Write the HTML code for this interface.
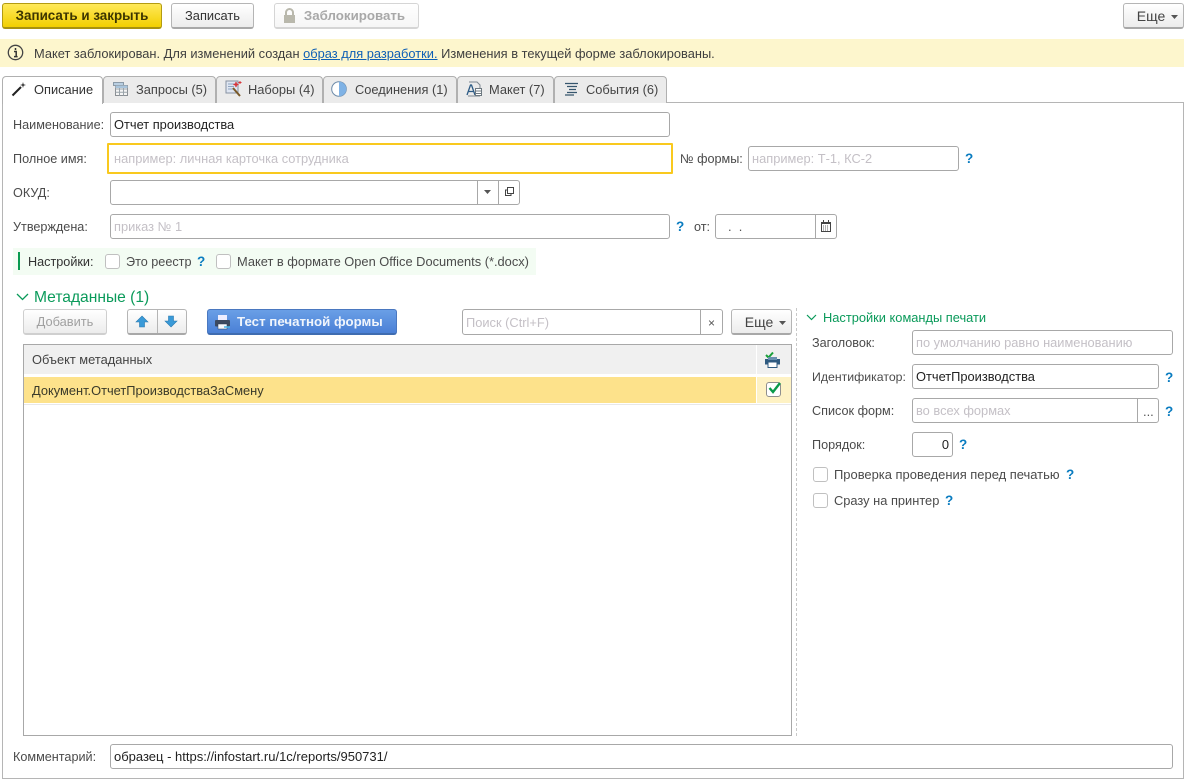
<!DOCTYPE html>
<html lang="ru"><head><meta charset="utf-8"><title>Макет</title>
<style>
html,body{margin:0;padding:0;background:#fff}
#p{position:relative;width:1186px;height:781px;overflow:hidden;background:#fff;font:12.85px/16px "Liberation Sans",Arial,sans-serif;color:#4b4b4b}
#p div,#p span.a,#p svg{position:absolute;box-sizing:border-box}
.t{white-space:nowrap}
.l{font-size:12.65px}
.btn{background:linear-gradient(#fff,#ececec);border:1px solid #b5b5b5;border-bottom:2px solid #a8a8a8;border-radius:3px;text-align:center;color:#333;line-height:24px}
.in{background:#fff;border:1px solid #a8a8a8;border-radius:3px;height:25px;line-height:23px;padding-left:3px;color:#222;white-space:nowrap;overflow:hidden}
.ph{color:#c4c0c6}
.q{color:#0a7cc0;font-weight:bold;font-size:13.5px;line-height:18px;white-space:nowrap}
.cb{width:15px;height:15px;border:1px solid #c0c0c0;border-radius:3px;background:#fff}
.tab{top:76px;height:27px;background:#ebebeb;border:1px solid #b0b0b0;border-bottom:none;border-radius:4px 4px 0 0;line-height:26px;color:#444;white-space:nowrap}
</style></head><body><div id="p">

<!-- Top command bar -->
<div class="btn" style="left:2px;top:3px;width:160px;height:26px;background:linear-gradient(#ffe95a,#f2cf00);border:1px solid #b39b12;border-bottom:2px solid #a8920f;font-weight:bold;font-size:13.4px;color:#3c3500">Записать и закрыть</div>
<div class="btn" style="left:171px;top:3px;width:83px;height:26px">Записать</div>
<div class="btn" style="left:274px;top:3px;width:145px;height:26px;border-color:#d5d5d5;background:linear-gradient(#fff,#f6f6f6);color:#a8a8a8;font-weight:bold;padding-left:16px;font-size:13.3px">Заблокировать</div>
<svg style="left:282px;top:8px" width="15" height="16" viewBox="0 0 15 16"><path d="M4 7V4.500a3.500 3.500 0 0 1 7 0V7" fill="none" stroke="#b9b8ac" stroke-width="2"/><rect x="2" y="7" width="11" height="8" fill="#b9b8ac"/></svg>
<div class="btn t" style="left:1123px;top:3px;width:61px;height:26px;padding-right:5px;font-size:14px;color:#444">Еще</div>
<svg style="left:1171px;top:15px" width="7" height="4"><path d="M0 0h7L3.500 4z" fill="#555"/></svg>

<!-- Banner -->
<div style="left:0;top:39px;width:1184px;height:28px;background:#fdf6cd"></div>
<svg style="left:7px;top:44px" width="17" height="17" viewBox="0 0 17 17"><circle cx="8.500" cy="8.500" r="7.200" fill="none" stroke="#444" stroke-width="1.300"/><path d="M8.500 4v2M7 7.500h2.200v5M7 12.600h3.600" fill="none" stroke="#333" stroke-width="1.500"/></svg>
<div class="t" style="left:34px;top:46px;color:#3f3f3f">Макет заблокирован. Для изменений создан <span style="color:#0e5fb5;text-decoration:underline">образ для разработки.</span> Изменения в текущей форме заблокированы.</div>

<!-- Main frame -->
<div style="left:2px;top:102px;width:1182px;height:677px;border:1px solid #b5b5b5"></div>

<!-- Tabs -->
<div class="tab" style="left:103px;width:113px;padding-left:32px">Запросы (5)</div>
<div class="tab" style="left:216px;width:107px;padding-left:31px">Наборы (4)</div>
<div class="tab" style="left:323px;width:134px;padding-left:31px">Соединения (1)</div>
<div class="tab" style="left:457px;width:97px;padding-left:31px">Макет (7)</div>
<div class="tab" style="left:554px;width:113px;padding-left:31px">События (6)</div>
<div class="tab" style="left:2px;width:101px;height:28px;background:#fff;padding-left:31px;color:#333">Описание</div>
<svg style="left:11px;top:81px" width="16" height="16" viewBox="0 0 16 16"><path d="M1.500 14.500 10 6" stroke="#222" stroke-width="2"/><path d="M12 1l.6 2.400L15 4l-2.400.6L12 7l-.6-2.400L9 4l2.400-.6z" fill="#222"/></svg>
<svg style="left:112px;top:81px" width="17" height="16" viewBox="0 0 17 16"><path d="M1.500 1.500h10v3h-10z" fill="#b9cfe2" stroke="#8a9aa8"/><rect x="3.500" y="4.500" width="12" height="10" fill="#f4f4f4" stroke="#8a8f94"/><path d="M3.500 8h12M3.500 11.300h12M7.500 4.500v10M11.500 4.500v10" stroke="#9aa3aa"/><path d="M3.500 4.500h12V7h-12z" fill="#a8c4dc"/></svg>
<svg style="left:225px;top:80px" width="17" height="17" viewBox="0 0 17 17"><rect x="1" y="1" width="12" height="12" fill="#dfe6f2" stroke="#8792a2"/><path d="M3 4h8M3 6.500h6M3 9h5" stroke="#8ea4c0"/><path d="M8 8l7 8" stroke="#7a5a2a" stroke-width="2"/><path d="M11 2l.5 2 2 .5-2 .5-.5 2-.5-2-2-.5 2-.5zM15 1v3M13.500 2.500h3" stroke="#d8343a" fill="#d8343a"/></svg>
<svg style="left:331px;top:81px" width="17" height="16" viewBox="0 0 17 16"><circle cx="8" cy="8" r="7.300" fill="#fff" stroke="#6c8aa8"/><path d="M8 .7a7.300 7.300 0 0 1 0 14.600z" fill="#7fb2e5"/></svg>
<svg style="left:466px;top:81px" width="17" height="16" viewBox="0 0 17 16"><path d="M3 1h8l3 3v3M2 15h12" fill="none" stroke="#7d8790"/><path d="M1 14 4.500 4h1L9 14M2.500 10.500h5" fill="none" stroke="#2d5b85" stroke-width="1.300"/><rect x="9.500" y="7.500" width="6" height="7" fill="#fff" stroke="#6d7880"/><path d="M10 10h5M10 12.500h5" stroke="#6d7880"/></svg>
<svg style="left:564px;top:82px" width="15" height="14" viewBox="0 0 15 14"><path d="M1 1.500h13M3 4.500h10M5 7.500h7M3 10.500h10M1 13h9" stroke="#36566e" stroke-width="1.300"/></svg>

<!-- Form rows -->
<div class="t l" style="left:13px;top:117px">Наименование:</div>
<div class="in" style="left:110px;top:112px;width:560px">Отчет производства</div>

<div class="t l" style="left:13px;top:151px">Полное имя:</div>
<div class="in ph" style="left:107px;top:143px;width:566px;height:31px;border:2px solid #f9c91e;border-radius:1px;line-height:28px;padding-left:5px">например: личная карточка сотрудника</div>
<div class="t l" style="left:680px;top:151px">№ формы:</div>
<div class="in ph" style="left:748px;top:146px;width:211px">например: Т-1, КС-2</div>
<div class="q" style="left:965px;top:150px">?</div>

<div class="t l" style="left:13px;top:185px">ОКУД:</div>
<div class="in" style="left:110px;top:180px;width:410px"></div>
<div style="left:477px;top:180px;width:1px;height:25px;background:#a8a8a8"></div>
<div style="left:498px;top:180px;width:1px;height:25px;background:#a8a8a8"></div>
<svg style="left:484px;top:190px" width="7" height="4"><path d="M0 0h7L3.500 4z" fill="#555"/></svg>
<svg style="left:504px;top:186px" width="11" height="11" viewBox="0 0 11 11"><path d="M3.500 1.500h6v6h-6zM3.500 4H1.500v5.500H7V7.500" fill="none" stroke="#444"/></svg>

<div class="t l" style="left:13px;top:219px">Утверждена:</div>
<div class="in ph" style="left:110px;top:214px;width:560px">приказ № 1</div>
<div class="q" style="left:676px;top:218px">?</div>
<div class="t l" style="left:694px;top:219px">от:</div>
<div class="in" style="left:715px;top:214px;width:122px;padding-left:12px;color:#555">. &nbsp;.</div>
<div style="left:815px;top:214px;width:1px;height:25px;background:#a8a8a8"></div>
<svg style="left:820px;top:220px" width="12" height="12" viewBox="0 0 12 12"><rect x="1.500" y="2.500" width="9" height="9" fill="#fff" stroke="#444"/><path d="M1 2h10v2H1zM3 0h1v2H3zM8 0h1v2H8z" fill="#444"/><path d="M3 6h6M3 8h6M3 10h6" stroke="#666" stroke-dasharray="1 1"/></svg>

<!-- Settings strip -->
<div style="left:13px;top:248px;width:523px;height:27px;background:#f3fcf3"></div>
<div style="left:18px;top:252px;width:2px;height:18px;background:#0a9a50"></div>
<div class="t l" style="left:28px;top:254px;color:#333">Настройки:</div>
<div class="cb" style="left:105px;top:254px"></div>
<div class="t l" style="left:126px;top:254px">Это реестр</div>
<div class="q" style="left:197px;top:253px">?</div>
<div class="cb" style="left:216px;top:254px"></div>
<div class="t" style="left:237px;top:254px">Макет в формате Open Office Documents (*.docx)</div>

<!-- Metadata -->
<svg style="left:16px;top:293px" width="13" height="8" viewBox="0 0 13 8"><path d="M1 1l5.500 5.500L12 1" fill="none" stroke="#0a9a5a" stroke-width="1.300"/></svg>
<div class="t" style="left:34px;top:289px;font-size:15.6px;line-height:18px;color:#0a9a5a">Метаданные (1)</div>
<div class="btn" style="left:23px;top:309px;width:84px;height:26px;border-color:#cfcfcf;color:#a0a0a0">Добавить</div>
<div class="btn" style="left:127px;top:309px;width:60px;height:26px"></div>
<div style="left:157px;top:310px;width:1px;height:23px;background:#b5b5b5"></div>
<svg style="left:135px;top:315px" width="14" height="13" viewBox="0 0 14 13"><path d="M7 1l6 6H9.500v5h-5V7H1z" fill="#3a9ad8" stroke="#2a7ab0" stroke-width=".6"/></svg>
<svg style="left:164px;top:315px" width="14" height="13" viewBox="0 0 14 13"><path d="M7 12l6-6H9.500V1h-5v5H1z" fill="#3a9ad8" stroke="#2a7ab0" stroke-width=".6"/></svg>
<div class="btn t" style="left:207px;top:309px;width:190px;height:26px;background:linear-gradient(#6a9fe6,#4a80d6);border:1px solid #4a78c0;border-bottom:2px solid #3f6cb0;color:#f0f5fc;font-weight:bold;font-size:13.3px;padding-left:29px;text-align:left">Тест печатной формы</div>
<svg style="left:214px;top:314px" width="17" height="16" viewBox="0 0 17 16"><rect x="4" y="1" width="9" height="5" fill="#eef"/><rect x="1" y="6" width="15" height="6.500" rx="1" fill="#3c4a60"/><rect x="4" y="10" width="9" height="5" fill="#f4f8fc" stroke="#2c3d55" stroke-width=".5"/><path d="M10 13h6" stroke="#48b4e8" stroke-width="1.500"/></svg>

<div class="in ph" style="left:462px;top:309px;width:261px;height:26px;line-height:25px">Поиск (Ctrl+F)</div>
<div style="left:700px;top:309px;width:1px;height:26px;background:#a8a8a8"></div>
<div class="t" style="left:708px;top:315px;font-size:12px;color:#555">×</div>
<div class="btn t" style="left:731px;top:309px;width:61px;height:26px;padding-right:5px;font-size:14px;color:#444">Еще</div>
<svg style="left:779px;top:321px" width="7" height="4"><path d="M0 0h7L3.500 4z" fill="#555"/></svg>

<!-- Table -->
<div style="left:23px;top:344px;width:769px;height:392px;border:1px solid #a8a8a8;background:#fff"></div>
<div style="left:24px;top:345px;width:732px;height:29px;background:#f0f0f0"></div>
<div style="left:757px;top:345px;width:34px;height:29px;background:#f0f0f0"></div>
<div class="t" style="left:32px;top:352px;color:#444">Объект метаданных</div>
<svg style="left:764px;top:351px" width="18" height="18" viewBox="0 0 18 18"><path d="M2 4l2.500 2.500L9 1.500" fill="none" stroke="#1aa03a" stroke-width="2"/><rect x="1" y="8" width="15" height="5.500" fill="#2f5a80"/><rect x="4" y="6" width="9" height="3" fill="#6a90b0"/><rect x="4" y="11" width="9" height="5.500" fill="#fff" stroke="#2f5a80"/></svg>
<div style="left:24px;top:377px;width:732px;height:26px;background:#fde28b"></div>
<div style="left:757px;top:377px;width:34px;height:26px;background:#fef2c4"></div>
<div style="left:24px;top:404px;width:767px;height:1px;background:#e8e8e8"></div>
<div class="t" style="left:32px;top:383px;color:#3a3a2a">Документ.ОтчетПроизводстваЗаСмену</div>
<div class="cb" style="left:766px;top:382px;background:#fff;border-color:#8f8f8f"></div>
<svg style="left:767px;top:381px" width="16" height="14" viewBox="0 0 16 14"><path d="M2.500 7l3.500 4L13 2" fill="none" stroke="#0a9a4a" stroke-width="2.400"/></svg>

<!-- Dashed divider -->
<div style="left:796px;top:308px;width:0;height:428px;border-left:1px dashed #c8c8c8"></div>

<!-- Right panel -->
<svg style="left:806px;top:314px" width="11" height="7" viewBox="0 0 11 7"><path d="M1 1l4.500 4.500L10 1" fill="none" stroke="#0a9a5a" stroke-width="1.200"/></svg>
<div class="t" style="left:823px;top:310px;color:#0a9a5a">Настройки команды печати</div>
<div class="t l" style="left:812px;top:335px">Заголовок:</div>
<div class="in ph" style="left:912px;top:330px;width:261px">по умолчанию равно наименованию</div>
<div class="t" style="left:812px;top:369px;font-size:12.3px">Идентификатор:</div>
<div class="in" style="left:912px;top:364px;width:247px">ОтчетПроизводства</div>
<div class="q" style="left:1165px;top:369px">?</div>
<div class="t l" style="left:812px;top:403px">Список форм:</div>
<div class="in ph" style="left:912px;top:398px;width:247px">во всех формах</div>
<div style="left:1137px;top:398px;width:1px;height:25px;background:#a8a8a8"></div>
<div class="t" style="left:1143px;top:404px;color:#555">...</div>
<div class="q" style="left:1165px;top:403px">?</div>
<div class="t l" style="left:812px;top:437px">Порядок:</div>
<div class="in" style="left:912px;top:432px;width:41px;text-align:right;padding-right:3px">0</div>
<div class="q" style="left:959px;top:436px">?</div>
<div class="cb" style="left:813px;top:467px"></div>
<div class="t" style="left:834px;top:467px;font-size:12.95px">Проверка проведения перед печатью</div>
<div class="q" style="left:1066px;top:466px">?</div>
<div class="cb" style="left:813px;top:493px"></div>
<div class="t" style="left:834px;top:493px">Сразу на принтер</div>
<div class="q" style="left:945px;top:492px">?</div>

<!-- Comment -->
<div class="t l" style="left:13px;top:749px">Комментарий:</div>
<div class="in" style="left:110px;top:744px;width:1063px;font-size:13px">образец - https://infostart.ru/1c/reports/950731/</div>

</div></body></html>
